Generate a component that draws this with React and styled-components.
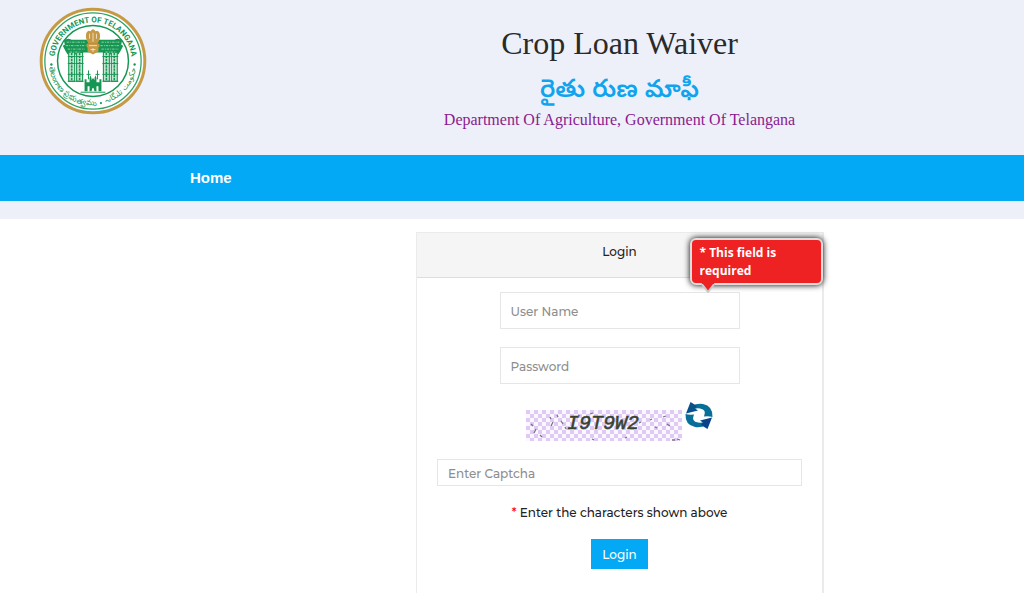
import React from "react";
import styled, { createGlobalStyle } from "styled-components";

const GlobalStyle = createGlobalStyle`
  * {
    box-sizing: border-box;
  }
  html,
  body,
  #root {
    height: 100%;
  }
  body {
    margin: 0;
    overflow: hidden;
    background: #fff;
    color: #222;
    font-family: Montserrat, Inter, sans-serif;
    font-size: 12px;
    font-weight: 500;
    line-height: 20px;
  }
`;

const Page = styled.div`
  min-height: 100%;
  display: flex;
  flex-direction: column;
`;

const Header = styled.header`
  display: flex;
  align-items: flex-start;
  min-height: 155px;
  background: #edf0f9;
`;

const LogoBox = styled.div`
  width: 21%;
  padding: 7px 0 0 39px;

  svg {
    display: block;
    width: 108px;
    height: 108px;
  }
`;

const Titles = styled.div`
  flex: 1;
  padding-top: 24px;
  text-align: center;
`;

const Title = styled.h1`
  margin: 0;
  font: 400 32px/38px "Liberation Serif", serif;
  color: #2a2a2a;
`;

const NativeTitle = styled.h2`
  margin: 12px 0 0;
  font: 600 25px/36px "Noto Sans Telugu", "Noto Sans", sans-serif;
  color: #10a3ee;
`;

const Department = styled.p`
  margin: 0;
  font: 400 16px/20px "Liberation Serif", serif;
  color: #8a1a8f;
`;

const Nav = styled.nav`
  display: flex;
  align-items: center;
  height: 46px;
  padding-left: 190px;
  background: #03a9f5;
`;

const NavLink = styled.a`
  font: 700 15px/20px "Liberation Sans", sans-serif;
  color: #fff;
  text-decoration: none;
`;

const Strip = styled.div`
  height: 18px;
  background: #edf0f9;
`;

const Main = styled.main`
  flex: 1;
  display: grid;
  grid-template-columns: 416fr 408fr 200fr;
  padding-top: 13px;
`;

const Panel = styled.section`
  grid-column: 2;
  border: 2px solid #ebebeb;
  border-width: 1px 2px 0 1px;
`;

const PanelHeading = styled.h3`
  margin: 0;
  height: 45px;
  padding-top: 9px;
  border-bottom: 1px solid #ddd;
  background: #f5f5f5;
  font-size: 12px;
  font-weight: 500;
  line-height: 20px;
  text-align: center;
`;

const Form = styled.form`
  display: flex;
  flex-direction: column;
  align-items: center;
  padding: 14px 20px 24px;
`;

const Field = styled.div`
  position: relative;
  width: ${(props) => (props.$wide ? "100%" : "240px")};
  margin-bottom: 18px;
`;

const Input = styled.input`
  display: block;
  width: 100%;
  height: ${(props) => (props.$short ? "27px" : "37px")};
  padding: 1px 10px 0;
  border: 1px solid #e6e6e6;
  background: #fff;
  color: #333;
  font: inherit;

  &::placeholder {
    color: #8e8e8e;
    opacity: 1;
  }
`;

const ErrorTip = styled.div`
  position: absolute;
  left: 190px;
  bottom: 44px;
  width: 133px;
  padding: 4px 8px 3px;
  border: 2px solid #ddd;
  border-radius: 6px;
  background: #ee2222;
  box-shadow: 0 0 6px #000;
  color: #fff;
  font: 700 12px/18px "Open Sans", sans-serif;

  svg {
    position: absolute;
    left: 7px;
    top: 100%;
    width: 18px;
    height: 10px;
  }
`;

const CaptchaRow = styled.div`
  display: flex;
  align-items: flex-start;
  gap: 3px;
  margin-bottom: 18px;
`;

const CaptchaImage = styled.svg`
  width: 156px;
  height: 31px;
  margin-top: 8px;
`;

const RefreshButton = styled.button`
  width: 28px;
  height: 28px;
  padding: 0;
  border: 0;
  background: none;

  svg {
    display: block;
  }
`;

const Hint = styled.p`
  margin: -1px 0 16px;

  span {
    color: #f00;
  }
`;

const LoginButton = styled.button`
  height: 30px;
  padding: 1px 11px 0;
  border: 0;
  background: #03a9f5;
  color: #fff;
  font: inherit;
`;

function Pillar({ x }) {
  return (
    <g stroke="#169653">
      <path d={`M${x} 46h6v29h-6z`} fill="#c5e6d3" strokeWidth="1.1" />
      <path d={`M${x + 3} 46v29`} strokeWidth="1.6" strokeDasharray="2.4 0.8" />
      <path d={`M${x - 1} 50h8M${x - 1} 57h8M${x - 1} 68h8M${x - 1} 75h8`} strokeWidth="1" />
    </g>
  );
}

function Emblem() {
  return (
    <svg viewBox="0 0 109 109" role="img" aria-label="Government of Telangana">
      <defs>
        <path id="arcTop" d="M15.500 54.500a39 39 0 1 1 78 0" />
        <path id="arcLeft" d="M9.500 58a45 45 0 0 0 51 41" />
        <path id="arcRight" d="M65 97.500a44 44 0 0 0 33 -37" />
      </defs>
      <circle cx="54.5" cy="54.5" r="52.3" fill="#fff" stroke="#c69a45" strokeWidth="3" />
      <circle cx="54.5" cy="54.5" r="48.6" fill="none" stroke="#2fa365" strokeWidth="1.3" />
      <circle cx="54.5" cy="54.5" r="35.8" fill="#fff" stroke="#169653" strokeWidth="1.5" />
      <g fill="#169653" fontFamily="Roboto, sans-serif" fontWeight="700">
        <text fontSize="8">
          <textPath href="#arcTop" startOffset="50%" textAnchor="middle">
            GOVERNMENT OF TELANGANA
          </textPath>
        </text>
        <text fontSize="8" fontWeight="500">
          <textPath href="#arcLeft" startOffset="50%" textAnchor="middle">
            తెలంగాణ ప్రభుత్వము
          </textPath>
        </text>
        <text fontSize="8" fontWeight="400" fontFamily="DejaVu Sans, sans-serif">
          <textPath href="#arcRight" startOffset="50%" textAnchor="middle">
            حکومت تلنگانہ
          </textPath>
        </text>
      </g>
      <g fill="#169653">
        <circle cx="12.5" cy="58" r="1.2" />
        <circle cx="96.5" cy="58" r="1.2" />
        <circle cx="62.5" cy="97" r="1.1" />
        <path d="M25 33l5-1 3 1h43l3-1 5 1-1 5 2 1-3 6-2 3H65V46H44v2H29l-2-3-3-6 2-1z" />
      </g>
      <Pillar x={30} />
      <Pillar x={38} />
      <Pillar x={65} />
      <Pillar x={73} />
      <path
        d="M28 35.500h18M63 35.500h18M27 39h20M62 39h20M29 42.500h17M63 42.500h17M31 45.500h11M67 45.500h11"
        stroke="#b6e0c8"
        strokeWidth="0.8"
        strokeDasharray="2.4 1.1 1 0.9"
      />
      <path d="M45.500 52q0-3 3-3h12q3 0 3 3v25h-18z" fill="#fff" />
      <path
        d="M46 85v-12h2v3h3v-4l1-3 1 3v2q1.500-4 3 0v-2l1-3 1 3v4h3v-3h2v12h-3v-5h-2v5h-2q-1.500-7-3 0h-2v-5h-2v5z"
        fill="#169653"
      />
      <path d="M50 64v9M59 64v9M48 68h4M57 68h4M42 86h25" stroke="#169653" strokeWidth="1" />
      <g fill="#c69a45">
        <path d="M48 33q-2-7 2-9l2 .5q2.500-4 5 0l2-.5q4 2 2 9l-2 4h-9z" />
        <path d="M48 37h13v3l-1 1v4l-5.500 3-5.500-3v-4l-1-1z" />
      </g>
      <path
        d="M51 27v5M54.500 26v9M58 27v5M50.500 39h8M52 43h5M54.500 41.500v4"
        stroke="#f7efdf"
        strokeWidth="0.8"
      />
    </svg>
  );
}

function RefreshIcon() {
  return (
    <svg width="28" height="28" viewBox="0 0 28 28" aria-hidden="true">
      <path d="M7 4Q12 1 18 2Q28 4 27.500 15Q24 14 19 14.500Q22 7.500 15 6.500Q12 6 9 7z" fill="#086f98" />
      <path d="M5.500 0L1 11.500l12-3-3-2L12 4z" fill="#07528a" />
      <path d="M21 23Q16 26 10 25Q0 23 .5 12Q4 13 9 12.500Q6 19.500 13 20.500Q16 21 19 20z" fill="#086f98" />
      <path d="M22.500 27L27 15.500l-12 3 3 2L16 23z" fill="#07428a" />
    </svg>
  );
}

function Captcha() {
  return (
    <CaptchaImage viewBox="0 0 156 31" role="img" aria-label="Captcha">
      <defs>
        <pattern id="checks" width="8" height="8" patternUnits="userSpaceOnUse">
          <rect width="8" height="8" fill="#fbf7fe" />
          <path d="M0 0h4v4H0zM4 4h4v4H4z" fill="#dfc9f5" />
        </pattern>
      </defs>
      <rect width="156" height="31" fill="url(#checks)" />
      <path
        d="M5 14l2 2M8 23l2-4M14 25l2 2M24 7l1 2M27 12l-2 4M31 5l1 2M35 11l2 3M39 17l1 2M52 5l2 1M64 4l3-1M66 29l2 1M113 13l2-1M124 10l2-1M129 17l2 1M137 7l3-1M141 14l3 2M146 30h3M151 29l3 1M99 28l2-1"
        stroke="#7b7088"
        strokeWidth="1.3"
      />
      <text
        x="41"
        y="19"
        fontFamily="Liberation Mono, monospace"
        fontSize="20"
        fontWeight="400"
        fontStyle="italic"
        fill="#39422f"
        stroke="#39422f"
        strokeWidth="0.5"
      >
        I9T9W2
      </text>
    </CaptchaImage>
  );
}

export default function App() {
  return (
    <React.Fragment>
      <GlobalStyle />
      <Page>
        <Header>
          <LogoBox>
            <Emblem />
          </LogoBox>
          <Titles>
            <Title>Crop Loan Waiver</Title>
            <NativeTitle lang="te">రైతు రుణ మాఫీ</NativeTitle>
            <Department>Department Of Agriculture, Government Of Telangana</Department>
          </Titles>
        </Header>
        <Nav>
          <NavLink href="#home">Home</NavLink>
        </Nav>
        <Strip />
        <Main>
          <Panel>
            <PanelHeading>Login</PanelHeading>
            <Form noValidate onSubmit={(e) => e.preventDefault()}>
              <Field>
                <Input type="text" placeholder="User Name" aria-label="User Name" aria-describedby="userError" />
                <ErrorTip id="userError" role="alert">
                  * This field is required
                  <svg viewBox="0 0 18 10" aria-hidden="true">
                    <path d="M2 0l7 9 7-9" fill="#ee2222" stroke="#ccc" strokeWidth="2" />
                    <path d="M3 -1h12v2H3z" fill="#ee2222" />
                  </svg>
                </ErrorTip>
              </Field>
              <Field>
                <Input type="password" placeholder="Password" aria-label="Password" />
              </Field>
              <CaptchaRow>
                <Captcha />
                <RefreshButton type="button" aria-label="Refresh captcha">
                  <RefreshIcon />
                </RefreshButton>
              </CaptchaRow>
              <Field $wide>
                <Input $short type="text" placeholder="Enter Captcha" aria-label="Enter Captcha" />
              </Field>
              <Hint>
                <span>*</span> Enter the characters shown above
              </Hint>
              <LoginButton type="submit">Login</LoginButton>
            </Form>
          </Panel>
        </Main>
      </Page>
    </React.Fragment>
  );
}
